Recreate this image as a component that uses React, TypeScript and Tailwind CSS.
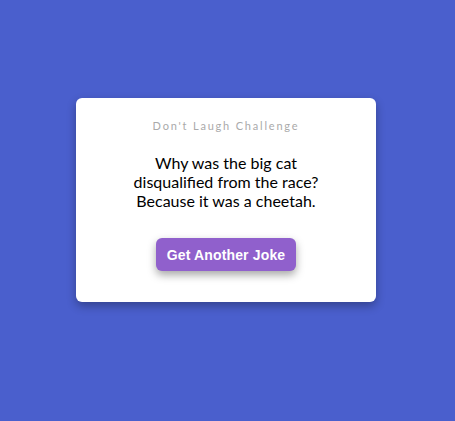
import React from "react";

const App = () => {
  return (
    <main className="flex min-h-screen w-full items-center justify-center bg-[#4a5fcd] pr-[3px] pb-[21px] font-['Lato',sans-serif]">
      <div className="flex h-[204px] w-[300px] flex-col items-center rounded-md bg-white px-5 pt-[21px] shadow-[0_4px_10px_rgba(0,0,0,0.3)]">
        <h3 className="text-[11px] leading-[14px] tracking-[1.8px] text-[#aaaaaa]">
          Don't Laugh Challenge
        </h3>
        <p className="mt-5 text-center text-base leading-[19px] text-black">
          Why was the big cat
          <br />
          disqualified from the race?
          <br />
          Because it was a cheetah.
        </p>
        <button
          type="button"
          className="mt-[28px] h-[33px] w-[140px] rounded-md bg-[#9060cc] font-['Liberation_Sans',sans-serif] text-sm font-bold tracking-[0.15px] text-white shadow-[0_4px_8px_rgba(0,0,0,0.35)]"
        >
          Get Another Joke
        </button>
      </div>
    </main>
  );
};

export default App;
